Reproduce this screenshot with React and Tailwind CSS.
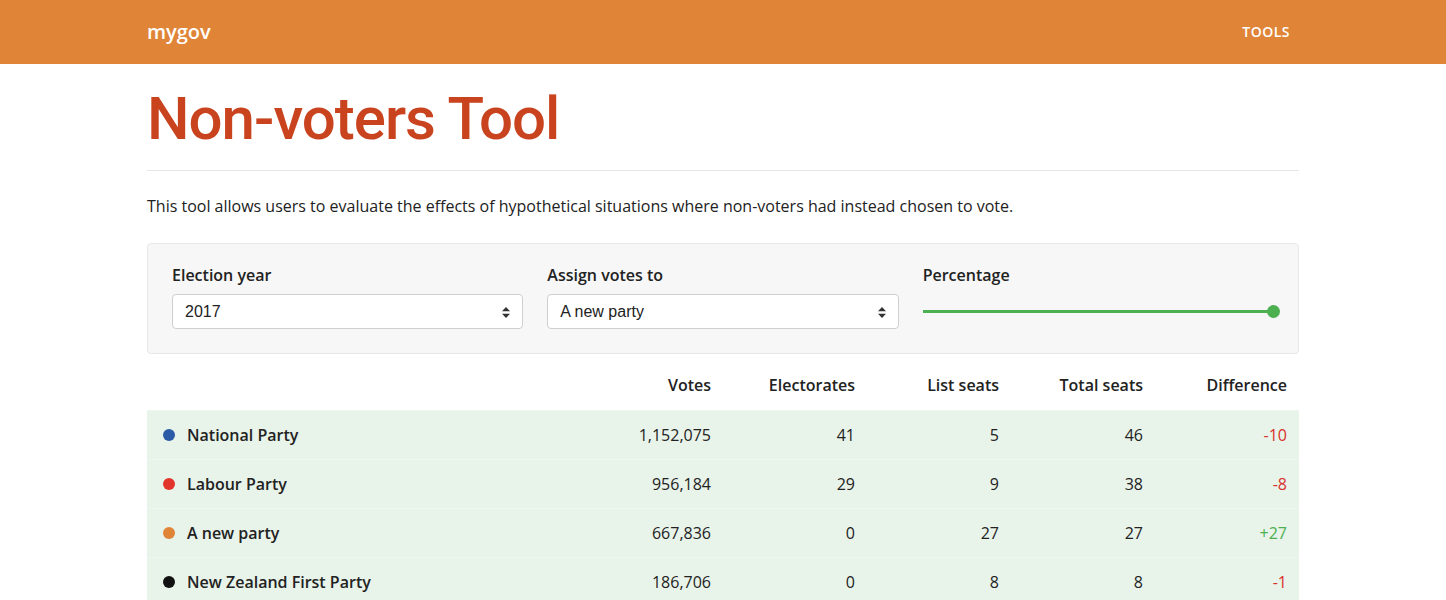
const parties = [
  { name: "National Party", color: "bg-[#2b5ba6]", votes: "1,152,075", electorates: 41, list: 5, total: 46, diff: "-10" },
  { name: "Labour Party", color: "bg-[#e2362c]", votes: "956,184", electorates: 29, list: 9, total: 38, diff: "-8" },
  { name: "A new party", color: "bg-[#e08538]", votes: "667,836", electorates: 0, list: 27, total: 27, diff: "+27" },
  { name: "New Zealand First Party", color: "bg-[#111111]", votes: "186,706", electorates: 0, list: 8, total: 8, diff: "-1" },
];

const SelectBox = ({ value }) => (
  <div className="relative h-[35px] bg-white border border-[#cfcfcf] rounded-[4px] flex items-center pl-[12px] font-['Liberation_Sans',sans-serif] text-[16px] text-[#222]">
    {value}
    <svg className="absolute right-[12px] top-[12px]" width="8" height="11" viewBox="0 0 8 11">
      <path d="M4 0 L8 4.2 L0 4.2 Z" fill="#333" />
      <path d="M4 11 L8 6.8 L0 6.8 Z" fill="#333" />
    </svg>
  </div>
);

const App = () => {
  return (
    <div className="min-h-[600px] bg-white font-['Open_Sans',sans-serif] text-[#222]">
      <header className="h-[64px] bg-[#e08538]">
        <div className="w-[1152px] mx-auto h-full flex items-center justify-between">
          <span className="text-white text-[20px] font-semibold -mt-[1px]">mygov</span>
          <span className="text-white text-[14px] font-semibold tracking-[0.5px] mr-[9px] -mt-[1px]">TOOLS</span>
        </div>
      </header>
      <main className="w-[1152px] mx-auto">
        <h1 className="font-['Roboto',sans-serif] font-medium tracking-[-1px] text-[#c9431f] text-[60px] leading-none pt-[25px] pb-[21px] border-b border-[#e6e6e6]">
          Non-voters Tool
        </h1>
        <p className="text-[16px] text-[#222] mt-[23px] leading-[24px]">
          This tool allows users to evaluate the effects of hypothetical situations where non-voters had instead chosen to vote.
        </p>
        <div className="mt-[25px] bg-[#f7f7f7] border border-[#e8e8e8] rounded-[4px] px-[24px] pt-[19px] pb-[24px] grid grid-cols-3 gap-[24px]">
          <div>
            <div className="text-[16px] font-semibold mb-[7px] leading-[24px]">Election year</div>
            <SelectBox value="2017" />
          </div>
          <div>
            <div className="text-[16px] font-semibold mb-[7px] leading-[24px]">Assign votes to</div>
            <SelectBox value="A new party" />
          </div>
          <div>
            <div className="text-[16px] font-semibold mb-[7px] leading-[24px]">Percentage</div>
            <div className="h-[35px] flex items-center">
              <div className="flex-1 h-[3px] bg-[#4caf50]"></div>
              <div className="w-[13px] h-[13px] rounded-full bg-[#4caf50] -ml-[6px] -mr-[6px]"></div>
            </div>
          </div>
        </div>
        <div className="mt-[6px]">
          <div className="grid grid-cols-[432px_repeat(5,144px)] h-[50px] items-center font-semibold text-[16px]">
            <div></div>
            <div className="text-right pr-[12px]">Votes</div>
            <div className="text-right pr-[12px]">Electorates</div>
            <div className="text-right pr-[12px]">List seats</div>
            <div className="text-right pr-[12px]">Total seats</div>
            <div className="text-right pr-[12px]">Difference</div>
          </div>
          {parties.map((p) => (
            <div key={p.name} className="grid grid-cols-[432px_repeat(5,144px)] h-[49px] items-center text-[16px] bg-[#e8f3ea] border-t border-[#eef6f0]">
              <div className="flex items-center pl-[16px]">
                <span className={`w-[12px] h-[12px] rounded-full ${p.color}`}></span>
                <span className="ml-[12px] font-semibold">{p.name}</span>
              </div>
              <div className="text-right pr-[12px]">{p.votes}</div>
              <div className="text-right pr-[12px]">{p.electorates}</div>
              <div className="text-right pr-[12px]">{p.list}</div>
              <div className="text-right pr-[12px]">{p.total}</div>
              <div className={`text-right pr-[12px] ${p.diff.startsWith("+") ? "text-[#4caf50]" : "text-[#d9302a]"}`}>{p.diff}</div>
            </div>
          ))}
        </div>
      </main>
    </div>
  );
};

export default App;
